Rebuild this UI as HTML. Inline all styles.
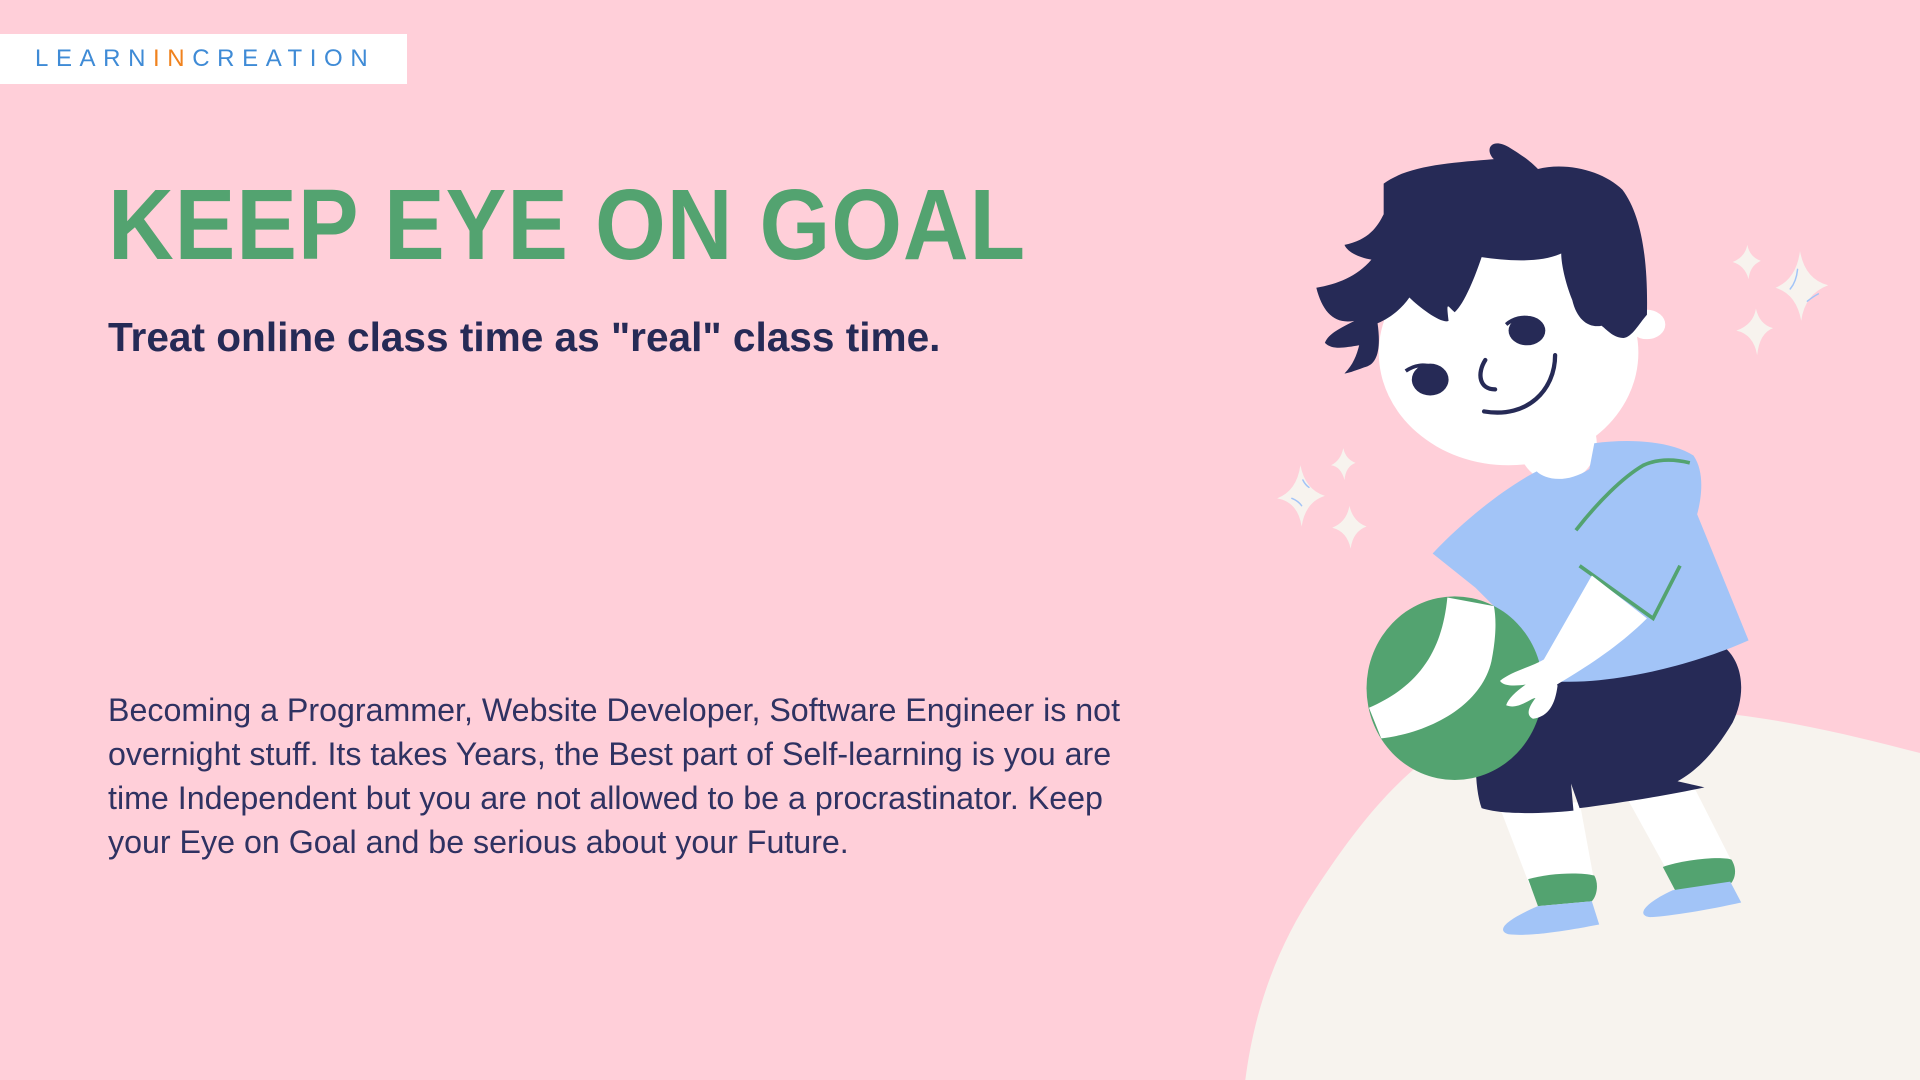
<!DOCTYPE html>
<html><head><meta charset="utf-8"><style>
html,body{margin:0;padding:0}
body{width:1920px;height:1080px;background:#ffcfd9;position:relative;overflow:hidden;font-family:"Liberation Sans",sans-serif}
svg{position:absolute;left:0;top:0}
.logo{position:absolute;left:0;top:34px;width:407px;height:50px;background:#fff}
.logo span{position:absolute;left:35px;top:11px;font-size:24px;letter-spacing:7.6px;color:#3f8bd6;font-weight:normal}
.logo b{color:#f0821e;font-weight:normal}
h1{position:absolute;left:108px;top:168px;margin:0;font-size:100px;font-weight:bold;color:#53a370;white-space:nowrap;transform:scaleX(0.91);transform-origin:left top;letter-spacing:1px}
h2{position:absolute;left:108px;top:314px;margin:0;font-size:40.6px;font-weight:bold;color:#262a56;white-space:nowrap}
p{position:absolute;left:108px;top:688px;margin:0;width:1035px;font-size:32.2px;line-height:44px;color:#2f3262}
</style></head><body>
<svg width="1920" height="1080" viewBox="0 0 1568 882">
<path d="M1017 882 C1025 820 1045 770 1075 725 C1110 672 1140 635 1185 605 C1230 580 1300 575 1380 580 C1450 585 1510 600 1568 615 L1568 882 Z" fill="#f7f3ee"/>
<path d="M1225 660 L1250 725 L1302 720 L1290 655 Z" fill="#fff"/>
<path d="M1325 645 L1362 712 L1415 705 L1382 640 Z" fill="#fff"/>
<path d="M1248 718 C1265 713 1290 712 1302 715 C1306 722 1304 732 1300 736 L1256 740 Z" fill="#53a370"/>
<path d="M1358 708 C1375 702 1405 699 1414 702 C1419 710 1417 718 1413 722 L1368 727 Z" fill="#53a370"/>
<path d="M1256 740 L1300 736 L1306 755 C1280 760 1250 765 1232 763 C1222 760 1228 752 1256 740 Z" fill="#a2c4f7"/>
<path d="M1366 727 L1413 720 L1422 737 C1395 743 1365 748 1348 749 C1336 748 1342 738 1366 727 Z" fill="#a2c4f7"/>
<path d="M1215 548 L1410 530 C1425 545 1425 570 1415 590 C1400 615 1385 630 1370 638 L1392 643 C1360 650 1320 656 1290 660 L1283 640 L1285 662 C1255 665 1225 665 1210 660 C1203 640 1203 600 1215 548 Z" fill="#262a56"/>
<ellipse cx="1345" cy="265" rx="15" ry="12" fill="#fff"/>
<circle cx="1272" cy="362" r="32" fill="#fff"/>
<ellipse cx="1232" cy="288" rx="106" ry="92" fill="#fff"/>
<path d="M1170 452 C1200 420 1235 395 1255 385 C1262 392 1280 395 1298 383 L1302 362 C1330 358 1365 360 1383 372 C1392 385 1390 405 1386 420 L1428 523 C1390 540 1340 553 1300 556 C1270 558 1245 556 1232 553 L1225 500 L1205 480 Z" fill="#a2c4f7"/>
<path d="M1287 433 C1305 410 1325 390 1342 380 C1355 374 1368 375 1380 378" stroke="#53a370" stroke-width="3" fill="none"/>
<path d="M1290 462 L1350 505 L1372 462" stroke="#53a370" stroke-width="3" fill="none"/>
<path d="M1300 470 L1345 505 C1320 530 1290 548 1270 560 C1268 575 1262 585 1255 586 C1245 588 1242 580 1245 575 C1235 580 1228 580 1227 575 C1235 565 1240 560 1238 560 C1230 562 1225 560 1225 556 C1235 548 1255 540 1260 540 Z" fill="#fff"/>
<ellipse cx="1188" cy="562" rx="72" ry="75" fill="#53a370"/>
<path d="M1182 488 C1178 530 1160 560 1118 578 L1128 603 C1170 598 1210 575 1218 540 C1222 520 1222 505 1220 495 Z" fill="#fff"/>
<path d="M1262 538 C1250 545 1235 548 1225 556 C1228 561 1240 560 1246 559 C1238 565 1232 570 1230 576 C1240 580 1250 570 1254 570 C1248 578 1246 584 1252 587 C1265 585 1270 575 1272 560 Z" fill="#fff"/>
<path d="M1130 150 C1150 135 1185 133 1220 130 C1212 122 1218 112 1232 120 C1245 128 1250 132 1256 138 C1280 132 1310 140 1325 155 C1340 175 1346 210 1345 257 C1338 265 1333 275 1326 276 C1318 276 1313 270 1308 266 C1298 268 1288 262 1284 245 C1278 230 1275 215 1275 207 C1258 215 1230 213 1210 210 C1205 225 1196 248 1188 255 C1182 250 1181 245 1183 262 C1178 265 1160 252 1151 243 C1145 252 1135 260 1125 264 C1128 285 1125 298 1114 300 C1106 303 1100 305 1098 305 C1105 298 1108 290 1110 282 C1098 284 1088 286 1082 280 C1085 272 1095 268 1106 262 C1090 265 1080 255 1075 235 C1092 232 1108 226 1120 212 C1108 210 1100 205 1098 200 C1118 196 1125 185 1130 175 Z" fill="#262a56"/>
<ellipse cx="1247" cy="270" rx="15" ry="12" fill="#262a56"/>
<path d="M1230 265 C1236 260 1244 258 1250 260" stroke="#262a56" stroke-width="3" fill="none"/>
<ellipse cx="1168" cy="310" rx="15" ry="13" fill="#262a56"/>
<path d="M1148 303 C1155 298 1163 297 1170 300" stroke="#262a56" stroke-width="3" fill="none"/>
<path d="M1213 294 C1206 305 1208 318 1221 318" stroke="#262a56" stroke-width="3.5" fill="none" stroke-linecap="round"/>
<path d="M1270 290 C1270 318 1248 342 1212 336" stroke="#262a56" stroke-width="3.5" fill="none" stroke-linecap="round"/>
<g fill="#f7f3ee">
<path d="M1470 205 Q1474 228 1493 233 Q1474 240 1471 262 Q1467 240 1450 235 Q1467 228 1470 205Z"/>
<path d="M1427 200 Q1429 210 1438 213 Q1429 217 1428 228 Q1425 217 1415 214 Q1425 210 1427 200Z"/>
<path d="M1434 252 Q1437 265 1448 268 Q1437 272 1435 290 Q1432 273 1418 270 Q1432 265 1434 252Z"/>
<path d="M1062 380 Q1066 400 1082 405 Q1066 410 1063 430 Q1060 410 1043 407 Q1059 401 1062 380Z"/>
<path d="M1097 366 Q1099 375 1107 378 Q1099 381 1098 392 Q1095 381 1087 380 Q1095 376 1097 366Z"/>
<path d="M1102 413 Q1105 426 1116 430 Q1105 434 1103 448 Q1100 434 1088 431 Q1100 426 1102 413Z"/>
</g>
<g stroke="#a2c4f7" stroke-width="1.2" fill="none" stroke-linecap="round">
<path d="M1468 220 Q1467 230 1462 236"/><path d="M1476 246 Q1481 242 1485 240"/>
<path d="M1055 407 Q1060 409 1063 413"/><path d="M1064 392 Q1066 396 1069 398"/>
</g>
</svg>
<div class="logo"><span>LEARN<b>IN</b>CREATION</span></div>
<h1>KEEP EYE ON GOAL</h1>
<h2>Treat online class time as "real" class time.</h2>
<p>Becoming a Programmer, Website Developer, Software Engineer is not overnight stuff. Its takes Years, the Best part of Self-learning is you are time Independent but you are not allowed to be a procrastinator. Keep your Eye on Goal and be serious about your Future.</p>
</body></html>
